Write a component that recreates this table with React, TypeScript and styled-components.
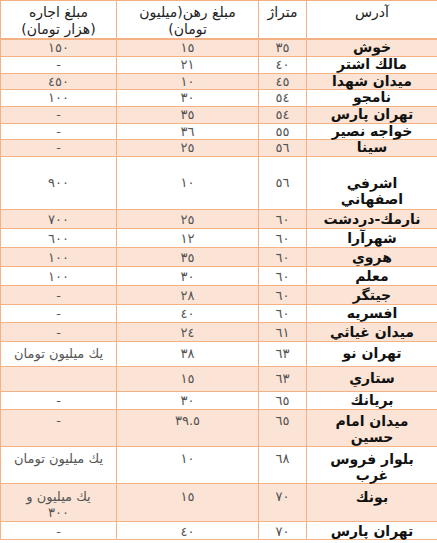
import React from 'react';
import styled, { createGlobalStyle } from 'styled-components';

const BORDER = '#f4b183';
const PEACH = '#fbe4d5';

const GlobalStyle = createGlobalStyle`
  html, body {
    margin: 0;
    padding: 0;
    background: #fff;
  }
  body {
    font-family: 'DejaVu Sans', sans-serif;
  }
`;

const Table = styled.table`
  width: 437px;
  border-collapse: collapse;
  table-layout: fixed;
  direction: rtl;
`;

const Col = styled.col<{ $w: number }>`
  width: ${(p) => p.$w}px;
`;

const HeadCell = styled.th`
  border: 1px solid ${BORDER};
  border-bottom: 2px solid ${BORDER};
  vertical-align: top;
  padding: 0 3px;
  font-weight: normal;
  font-size: 14px;
  color: #222;
  text-align: center;
`;

const Row = styled.tr<{ $shade: boolean }>`
  background: ${(p) => (p.$shade ? PEACH : '#fff')};
`;

const Cell = styled.td`
  border: 1px solid ${BORDER};
  padding: 0 3px;
  vertical-align: top;
  text-align: center;
  font-size: 13px;
  color: #555;
`;

const AddressCell = styled(Cell)`
  font-size: 14px;
  font-weight: bold;
  color: #111;
`;

// fixed-height box so every row keeps the pitch of the original table
const Box = styled.div<{ $h: number; $pt: number; $lh: number }>`
  box-sizing: border-box;
  height: ${(p) => p.$h}px;
  padding-top: ${(p) => p.$pt}px;
  line-height: ${(p) => p.$lh}px;
`;

const Line = styled.span`
  display: block;
  white-space: nowrap;
`;

type Item = {
  addr: string[];
  area: string;
  rahn: string;
  ejare: string[];
  h: number;
  pt: number;
  lh?: number;
};

const rows: Item[] = [
  { addr: ['خوش'], area: '٣٥', rahn: '١٥', ejare: ['١٥٠'], h: 17, pt: 0 },
  { addr: ['مالك اشتر'], area: '٤٠', rahn: '٢١', ejare: ['-'], h: 17, pt: 0 },
  { addr: ['میدان شهدا'], area: '٤٥', rahn: '١٠', ejare: ['٤٥٠'], h: 16, pt: 0 },
  { addr: ['نامجو'], area: '٥٤', rahn: '٣٠', ejare: ['١٠٠'], h: 17, pt: 0 },
  { addr: ['تهران پارس'], area: '٥٤', rahn: '٣٥', ejare: ['-'], h: 17, pt: 0 },
  { addr: ['خواجه نصیر'], area: '٥٥', rahn: '٣٦', ejare: ['-'], h: 16, pt: 0 },
  { addr: ['سینا'], area: '٥٦', rahn: '٢٥', ejare: ['-'], h: 17, pt: 0 },
  { addr: ['اشرفي', 'اصفهاني'], area: '٥٦', rahn: '١٠', ejare: ['٩٠٠'], h: 53, pt: 18, lh: 16 },
  { addr: ['نارمك-دردشت'], area: '٦٠', rahn: '٢٥', ejare: ['٧٠٠'], h: 19, pt: 2 },
  { addr: ['شهرآرا'], area: '٦٠', rahn: '١٢', ejare: ['٦٠٠'], h: 19, pt: 2 },
  { addr: ['هروي'], area: '٦٠', rahn: '٣٥', ejare: ['١٠٠'], h: 19, pt: 2 },
  { addr: ['معلم'], area: '٦٠', rahn: '٣٠', ejare: ['١٠٠'], h: 19, pt: 2 },
  { addr: ['جیتگر'], area: '٦٠', rahn: '٢٨', ejare: ['-'], h: 19, pt: 2 },
  { addr: ['افسریه'], area: '٦٠', rahn: '٤٠', ejare: ['-'], h: 18, pt: 1 },
  { addr: ['میدان غیاثي'], area: '٦١', rahn: '٢٤', ejare: ['-'], h: 19, pt: 2 },
  { addr: ['تهران نو'], area: '٦٣', rahn: '٣٨', ejare: ['یك میلیون تومان'], h: 25, pt: 4 },
  { addr: ['ستاري'], area: '٦٣', rahn: '١٥', ejare: [''], h: 25, pt: 4 },
  { addr: ['بریانك'], area: '٦٥', rahn: '٣٠', ejare: ['-'], h: 18, pt: 1 },
  { addr: ['میدان امام', 'حسین'], area: '٦٥', rahn: '٣٩.٥', ejare: ['-'], h: 37, pt: 3, lh: 16 },
  { addr: ['بلوار فروس', 'غرب'], area: '٦٨', rahn: '١٠', ejare: ['یك میلیون تومان'], h: 37, pt: 4, lh: 16 },
  { addr: ['بونك'], area: '٧٠', rahn: '١٥', ejare: ['یك میلیون و', '٣٠٠'], h: 38, pt: 5, lh: 16 },
  { addr: ['تهران پارس'], area: '٧٠', rahn: '٤٠', ejare: ['-'], h: 18, pt: 2 },
];

const Lines = ({ items }: { items: string[] }) => (
  <>
    {items.map((t, i) => (
      <Line key={i}>{t || '\u00a0'}</Line>
    ))}
  </>
);

const head = { $h: 37, $pt: 3, $lh: 17 };

const App = () => (
  <>
    <GlobalStyle />
    <Table>
      <colgroup>
        <Col $w={131} />
        <Col $w={48} />
        <Col $w={142} />
        <Col $w={116} />
      </colgroup>
      <thead>
        <tr>
          <HeadCell>
            <Box {...head}>آدرس</Box>
          </HeadCell>
          <HeadCell>
            <Box {...head}>متراژ</Box>
          </HeadCell>
          <HeadCell>
            <Box {...head}>مبلغ رهن(میلیون تومان)</Box>
          </HeadCell>
          <HeadCell>
            <Box {...head}>
              <Line>مبلغ اجاره</Line>
              <Line>(هزار تومان)</Line>
            </Box>
          </HeadCell>
        </tr>
      </thead>
      <tbody>
        {rows.map((r, i) => {
          const box = { $h: r.h - 1, $pt: r.pt, $lh: r.lh ?? 15 };
          return (
            <Row key={i} $shade={i % 2 === 0}>
              <AddressCell>
                <Box {...box}>
                  <Lines items={r.addr} />
                </Box>
              </AddressCell>
              <Cell>
                <Box {...box}>{r.area}</Box>
              </Cell>
              <Cell>
                <Box {...box}>{r.rahn}</Box>
              </Cell>
              <Cell>
                <Box {...box}>
                  <Lines items={r.ejare} />
                </Box>
              </Cell>
            </Row>
          );
        })}
      </tbody>
    </Table>
  </>
);

export default App;
